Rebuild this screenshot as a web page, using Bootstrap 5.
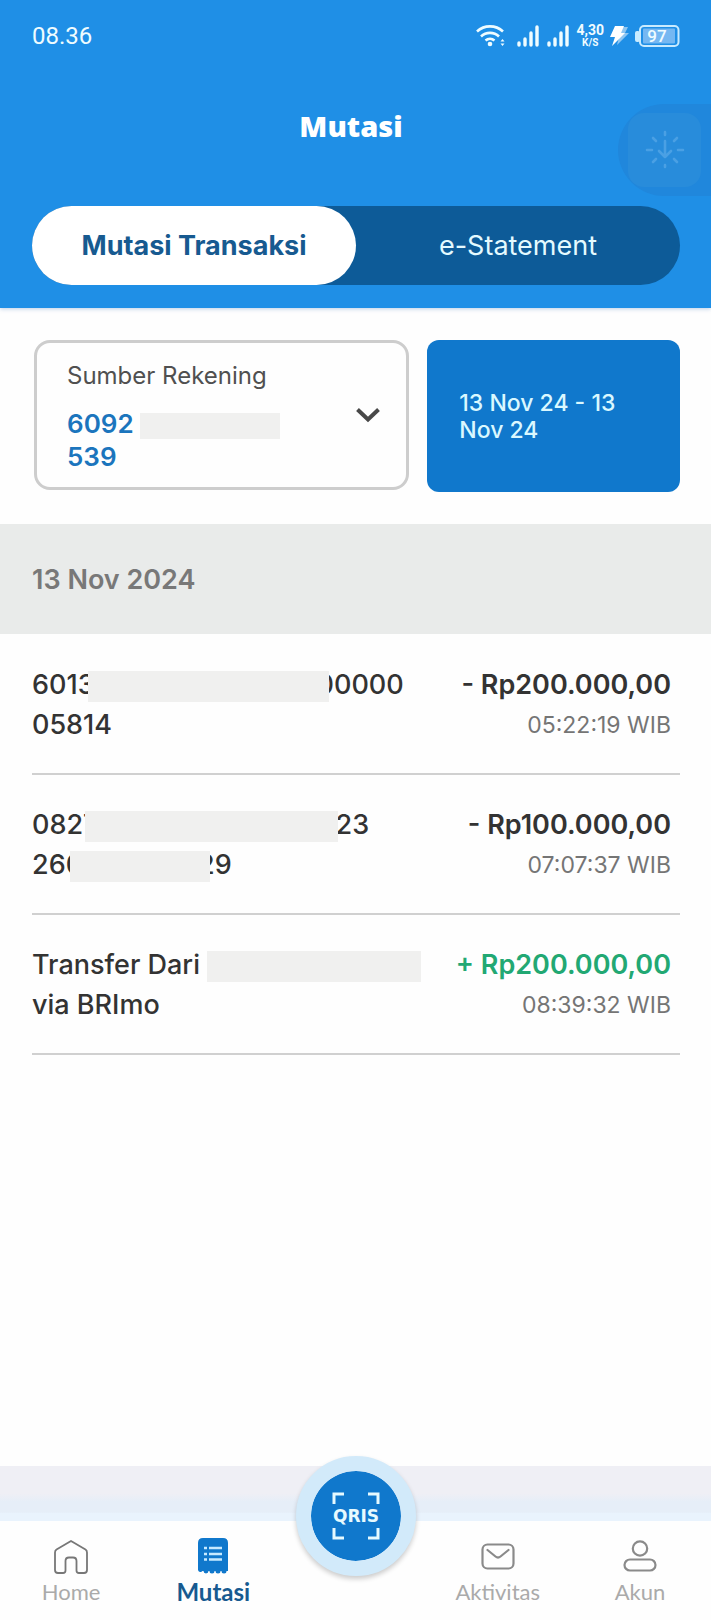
<!DOCTYPE html>
<html lang="id">
<head>
<meta charset="utf-8">
<meta name="viewport" content="width=device-width, initial-scale=1">
<title>Mutasi</title>
<link href="https://cdn.jsdelivr.net/npm/bootstrap@5.3.0/dist/css/bootstrap.min.css" rel="stylesheet">
<style>
  body { font-family: Inter, sans-serif; font-size: 27px; line-height: 40px; color: #333; background: #fefefe; }
  button { font: inherit; }
  .page-pad { padding-left: 32px; padding-right: 31px; }

  .app-header { background: #1f8fe6; color: #effcff; padding-bottom: 23px; box-shadow: 0 1px 4px rgba(70, 120, 190, .35); }
  .status-bar { font: 24px/24px Roboto, sans-serif; padding-top: 24px; gap: 6px; }
  .net-speed { font: 700 14px/13px Roboto, sans-serif; }
  .net-speed small { display: block; font-size: 10px; line-height: 11px; }
  .app-title { font: 800 29px/40px "Open Sans", sans-serif; margin: 58px 10px 60px 0; color: #fff; }
  .tab-track { background: #0d5b98; border-radius: 40px; height: 79px; }
  .tab-track button { border: 0; background: none; color: #e4faff; border-radius: 40px; }
  .tab-track button.active { background: #fff; color: #175a90; font-weight: 700; }
  .quick-panel { top: 104px; right: 0; width: 93px; height: 92px; padding: 9px 10px; background: #2087dc; border-radius: 46px 0 0 46px; border: 0; }
  .quick-tile { background: #288cdb; border-radius: 16px; width: 73px; height: 74px; }

  .filters { padding-top: 32px; padding-bottom: 32px; gap: 18px; }
  .account { flex: 1; margin-left: 2px; margin-bottom: 2px; padding: 14px 26px 14px 30px; border: 3px solid #cdcdcd; border-radius: 16px; background: none; color: #505050; }
  .account-label { font-size: 24px; line-height: 38px; margin-bottom: 12px; }
  .account-no { font-size: 26px; font-weight: 600; line-height: 33px; color: #1b75bd; }
  .period { flex: 0 0 39%; padding: 2px 60px 0 32px; border: 0; border-radius: 12px; background: #1078cc; color: #daf8ff; font-size: 23px; line-height: 27px; font-weight: 500; }

  .day { background: #e9ebea; color: #787878; font-size: 27px; font-weight: 600; padding-top: 36px; padding-bottom: 34px; margin: 0; line-height: 40px; }
  .entries { padding-top: 1px; }
  .entry { padding: 30px 9px 28px 0; border-bottom: 2px solid #d0d0d0; font-weight: 500; }
  .amount { font-weight: 600; }
  .amount-in { color: #22a873; }
  .time { font-size: 23px; font-weight: 400; color: #757575; }

  .redacted { display: inline-block; position: relative; height: 31px; vertical-align: middle; background: #f0f0ef; }
  .w-acc { width: 140px; height: 26px; }
  .w-a { width: 241px; margin-left: -7px; margin-right: -12px; }
  .w-b { width: 253px; margin-left: -14px; margin-right: -2px; }
  .w-c { width: 140px; margin-left: -13px; margin-right: -12px; }
  .w-d { width: 214px; }

  .strip { height: 55px; background: linear-gradient(#efeff5 50%, #e6eef8 65%, #e6eef8 84%, #e9f3fd 86%); }
  .tab-bar { font: 22px/28px Lato, sans-serif; height: 99px; background: #fefefe; }
  .tab-bar > * { flex: 1; }
  .tab-bar a { color: #aaa; text-decoration: none; padding-top: 16px; }
  .tab-bar a.active { color: #175a90; font-weight: 700; font-size: 24px; }
  .tab-bar svg { display: block; margin: 0 auto 3px; }
  .qris { top: 50px; width: 120px; height: 120px; border: 15px solid #d2eafa; background: #1078cc; background-clip: padding-box; box-shadow: 0 3px 5px rgba(0, 0, 0, .2); }
</style>
</head>
<body class="d-flex flex-column min-vh-100">

<header class="app-header page-pad position-relative">
  <div class="status-bar d-flex align-items-center">
    <span class="me-auto">08.36</span>
    <svg width="34" height="24" viewBox="0 0 34 24" fill="none" stroke="currentColor" stroke-width="2.6" aria-hidden="true">
      <path d="M1 7.500a19 19 0 0 1 26 0M5 12.500a13 13 0 0 1 18 0M9.500 16.500a7 7 0 0 1 9 0"/>
      <circle cx="14" cy="20" r="2.300" fill="currentColor" stroke="none"/>
      <path d="m24.500 17.500 2-2.500 2 2.500zM24.500 19.500l2 2.500 2-2.500z" fill="currentColor" stroke="none"/>
    </svg>
    <svg width="24" height="24" viewBox="0 0 24 24" stroke="currentColor" stroke-width="3.400" stroke-linecap="round" aria-hidden="true"><path d="M3 19v2M9 15v6M15 9v12M21 3v18"/></svg>
    <svg width="24" height="24" viewBox="0 0 24 24" stroke="currentColor" stroke-width="3.400" stroke-linecap="round" aria-hidden="true"><path d="M3 19v2M9 15v6M15 9v12M21 3v18"/></svg>
    <span class="net-speed text-center">4,30<small>K/S</small></span>
    <svg width="19" height="24" viewBox="0 0 19 24" aria-hidden="true">
      <path d="M8 3h10l-3 6h4L7 21l2-8H5z" fill="#8fc6f2"/>
      <path d="M5 2h9l-3 7h4L2 22l3-9H0z" fill="#fff"/>
    </svg>
    <svg width="45" height="24" viewBox="0 0 45 24" aria-hidden="true">
      <rect x="0" y="7" width="5" height="11" rx="2" fill="#c8ebff"/>
      <rect x="5" y="2" width="38.500" height="20" rx="4" fill="#1f8fe6" stroke="#c8ebff" stroke-width="2"/>
      <rect x="8" y="4.500" width="32" height="15" rx="1" fill="#75b8f2"/>
      <text x="22" y="18" text-anchor="middle" font-family="Roboto" font-size="17" font-weight="500" fill="#effcff">97</text>
    </svg>
  </div>
  <h1 class="app-title text-center">Mutasi</h1>
  <div class="tab-track d-flex" role="tablist">
    <button type="button" class="w-50 active" role="tab" aria-selected="true">Mutasi Transaksi</button>
    <button type="button" class="w-50" role="tab" aria-selected="false">e-Statement</button>
  </div>
  <button type="button" class="quick-panel position-absolute" aria-label="Panel cepat">
    <span class="quick-tile d-flex align-items-center justify-content-center">
      <svg width="40" height="40" viewBox="0 0 40 40" fill="none" stroke="#4aa0e4" stroke-width="2.600" stroke-linecap="round" stroke-linejoin="round">
        <path d="M20 11v16M14 21l6 6 6-6M20 2v3M20 35v2M2 20h5M33 20h5M8 8l3 3M32 8l-3 3M8 32l3-3M32 32l-3-3"/>
      </svg>
    </span>
  </button>
</header>

<main>
  <div class="filters page-pad d-flex">
    <button type="button" class="account d-flex align-items-center text-start" aria-haspopup="listbox">
      <span class="flex-grow-1">
        <span class="account-label d-block">Sumber Rekening</span>
        <span class="account-no d-block">6092 <span class="redacted w-acc"></span><br>539</span>
      </span>
      <svg width="24" height="16" viewBox="0 0 24 16" fill="none" stroke="#484848" stroke-width="4" aria-hidden="true"><path d="m1.500 2.500 10.500 10 10.500-10"/></svg>
    </button>
    <button type="button" class="period text-start">13 Nov 24 - 13 Nov 24</button>
  </div>

  <h2 class="day page-pad">13 Nov 2024</h2>

  <div class="entries page-pad">
    <div class="entry d-flex justify-content-between">
      <div class="text-nowrap">6013<span class="redacted w-a"></span>00000<br>05814</div>
      <div class="text-end text-nowrap"><div class="amount">- Rp200.000,00</div><div class="time">05:22:19 WIB</div></div>
    </div>
    <div class="entry d-flex justify-content-between">
      <div class="text-nowrap">0827<span class="redacted w-b"></span>23<br>260<span class="redacted w-c"></span>29</div>
      <div class="text-end text-nowrap"><div class="amount">- Rp100.000,00</div><div class="time">07:07:37 WIB</div></div>
    </div>
    <div class="entry d-flex justify-content-between">
      <div class="text-nowrap">Transfer Dari <span class="redacted w-d"></span><br>via BRImo</div>
      <div class="text-end text-nowrap"><div class="amount amount-in">+ Rp200.000,00</div><div class="time">08:39:32 WIB</div></div>
    </div>
  </div>
</main>

<footer class="mt-auto position-relative">
  <div class="strip"></div>
  <nav class="tab-bar d-flex text-center">
    <a href="#home">
      <svg width="36" height="38" viewBox="0 0 36 38" fill="none" stroke="#777" stroke-width="1.800" stroke-linejoin="round"><path d="M18 4 3.500 12.500Q2 13.500 2 15.500V33q0 3 3 3h5q2.500 0 2.500-2.500V24q0-3.500 3.500-3.500h4q3.500 0 3.500 3.500v9.500q0 2.500 2.500 2.500h5q3 0 3-3V15.500q0-2-1.500-3z"/></svg>
      Home
    </a>
    <a href="#mutasi" class="active" aria-current="page">
      <svg width="32" height="38" viewBox="0 0 32 38">
        <path d="M1 6q0-5 5-5h20q5 0 5 5v28h-1.500a2.500 2.500 0 0 1-5 0h-1a2.500 2.500 0 0 1-5 0h-1a2.500 2.500 0 0 1-5 0h-1a2.500 2.500 0 0 1-5 0h-1a2.500 2.500 0 0 1-4.500-1z" fill="#1078cc"/>
        <path d="M7 11h3M7 17h3M7 22.500h3M12 11h13M12 17h13M12 22.500h13" stroke="#c7eaff" stroke-width="2.400"/>
      </svg>
      Mutasi
    </a>
    <span></span>
    <a href="#aktivitas">
      <svg width="36" height="38" viewBox="0 0 36 38" fill="none" stroke="#8a8a8a" stroke-width="2.200" stroke-linecap="round" stroke-linejoin="round"><rect x="2.500" y="7.500" width="31" height="24" rx="5"/><path d="m7.500 13 8 6.500q2.500 2 5 0l8-6.500"/></svg>
      Aktivitas
    </a>
    <a href="#akun">
      <svg width="36" height="38" viewBox="0 0 36 38" fill="none" stroke="#8a8a8a" stroke-width="2.200"><circle cx="18" cy="11.500" r="7.200"/><rect x="2.500" y="22.500" width="31" height="11" rx="5.500"/></svg>
      Akun
    </a>
  </nav>
  <button type="button" class="qris rounded-circle position-absolute start-50 translate-middle p-0 d-flex align-items-center justify-content-center" aria-label="QRIS">
    <svg width="50" height="50" viewBox="0 0 50 50">
      <path d="M3 13V3h10M37 3h10v10M47 37v10H37M13 47H3V37" fill="none" stroke="#e6faff" stroke-width="3"/>
      <text x="25" y="31" text-anchor="middle" font-family="DejaVu Sans" font-weight="700" font-size="17" fill="#e6faff">QRIS</text>
    </svg>
  </button>
</footer>

<script src="https://cdn.jsdelivr.net/npm/bootstrap@5.3.0/dist/js/bootstrap.bundle.min.js"></script>
</body>
</html>
